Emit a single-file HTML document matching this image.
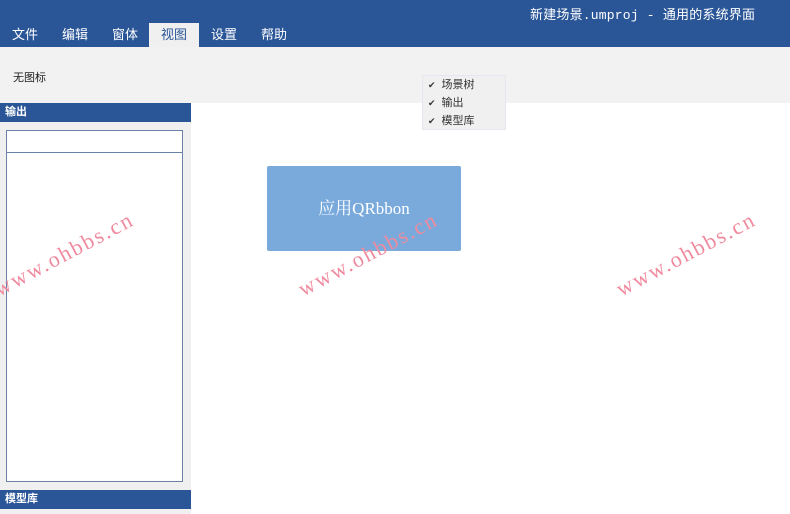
<!DOCTYPE html>
<html><head><meta charset="utf-8"><style>
*{margin:0;padding:0;box-sizing:border-box}
body{width:790px;height:514px;overflow:hidden;background:#fff;font-family:"Liberation Sans","Noto Sans CJK SC",sans-serif;position:relative}
.hdr{position:absolute;left:0;top:0;width:790px;height:47px;background:#2a5698}
.title{position:absolute;left:530px;top:4px;color:#fff;font-size:13px;letter-spacing:0.2px;font-family:"Liberation Mono","Noto Sans CJK SC",monospace}
.tab{position:absolute;top:23px;height:24px;width:50px;text-align:center;color:#fff;font-size:13px;line-height:24px}
.tab.on{background:#f0f0f0;color:#2a5698}
.tb{position:absolute;left:0;top:47px;width:790px;height:56px;background:#f2f2f2}
.lp{position:absolute;left:0;top:103px;width:191px;height:411px;background:#f0f0f0}
.ph{position:absolute;left:0;width:191px;height:19px;background:#2a5698;color:#fff;font-size:11px;font-weight:bold;line-height:19px;padding-left:5px}
.box{position:absolute;left:6px;width:177px;background:#fff;border:1px solid #6a82a8}
.menu{position:absolute;left:422px;top:75px;width:84px;height:55px;background:#f0f0f0;border:1px solid #e4e8ee;font-size:11px;color:#333}
.menu div{height:18px;line-height:18px;padding-left:5px}
.menu span{font-size:9px;margin-right:6px}
.btn{position:absolute;left:267px;top:166px;width:194px;height:85px;background:#7aaadc;border-radius:2px;color:#fff;font-size:17px;text-align:center;line-height:85px;font-family:"Liberation Serif","Noto Serif CJK SC",serif}
.wm{position:absolute;color:#f08a9e;font-size:22px;font-family:"Liberation Serif",serif;transform:rotate(-28deg);transform-origin:left bottom;letter-spacing:2px;white-space:nowrap}
</style></head><body>
<div class="hdr"></div>
<div class="title">新建场景.umproj - 通用的系统界面</div>
<div class="tab" style="left:0">文件</div>
<div class="tab" style="left:50px">编辑</div>
<div class="tab" style="left:100px">窗体</div>
<div class="tab on" style="left:149px">视图</div>
<div class="tab" style="left:199px">设置</div>
<div class="tab" style="left:249px">帮助</div>
<div class="tb"><div style="position:absolute;left:13px;top:22px;font-size:11px;color:#222">无图标</div></div>
<div class="lp"></div>
<div class="ph" style="top:103px">输出</div>
<div class="box" style="top:130px;height:23px"></div>
<div class="box" style="top:152px;height:330px"></div>
<div class="ph" style="top:490px">模型库</div>
<div class="menu"><div><span>✔</span>场景树</div><div><span>✔</span>输出</div><div><span>✔</span>模型库</div></div>
<div class="btn">应用QRbbon</div>
<div class="wm" style="left:2px;top:276px">www.ohbbs.cn</div>
<div class="wm" style="left:306px;top:276px">www.ohbbs.cn</div>
<div class="wm" style="left:624px;top:276px">www.ohbbs.cn</div>
</body></html>
